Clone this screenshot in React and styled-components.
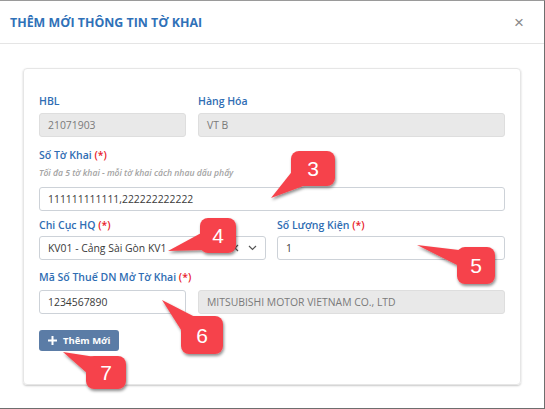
import React from "react";
import styled, { createGlobalStyle } from "styled-components";

const GlobalStyle = createGlobalStyle`
	html, body {
		margin: 0;
		padding: 0;
		background: #ffffff;
	}
	body {
		font-family: "Open Sans", "Noto Sans", "Liberation Sans", sans-serif;
	}
	* {
		box-sizing: border-box;
	}
`;

// Styled Components

const Modal = styled.div`
	position: relative;
	width: 545px;
	height: 409px;
	background: #fff;
	border-top: 1px solid #9a9a9a;
	border-right: 1px solid #6e6e6e;
	border-bottom: 1px solid #6e6e6e;
	overflow: hidden;
`;

const Header = styled.div`
	height: 43px;
	padding: 0 20px 0 10px;
	display: flex;
	align-items: center;
	justify-content: space-between;
	border-bottom: 1px solid #e5e5e5;
`;

const Title = styled.h4`
	margin: 0;
	font-size: 12.4px;
	font-weight: 700;
	color: #2f71b8;
`;

const CloseButton = styled.span`
	font-family: "Liberation Sans", sans-serif;
	font-size: 17px;
	color: #8a8a8a;
	line-height: 1;
`;

const Body = styled.div`
	padding: 24px 23px 0 23px;
`;

const Card = styled.div`
	width: 498px;
	height: 317px;
	border: 1px solid #e6e6e6;
	border-radius: 4px;
	box-shadow: 0 1px 2px rgba(0, 0, 0, 0.22);
	padding: 24px 15px 0 15px;
`;

const Row = styled.div`
	display: grid;
	grid-template-columns: ${(p) => p.$cols};
	column-gap: ${(p) => p.$gap || 12}px;
	margin-top: ${(p) => p.$mt || 0}px;
`;

const Field = styled.div`
	display: flex;
	flex-direction: column;
`;

const Label = styled.label`
	font-size: 10.5px;
	font-weight: 600;
	line-height: 16px;
	color: #2f6db3;
	margin-bottom: ${(p) => p.$mb ?? 4}px;
`;

const Required = styled.span`
	color: #e8202a;
`;

const Hint = styled.div`
	font-size: 8.6px;
	font-style: italic;
	font-weight: 600;
	color: #a3a3a3;
	line-height: 12px;
	margin-bottom: 8px;
`;

const Input = styled.div`
	height: 24px;
	display: flex;
	align-items: center;
	padding: 0 8px;
	font-size: 10.4px;
	border-radius: 3px;
	border: 1px solid ${(p) => (p.$disabled ? "#dedede" : "#cdd2d8")};
	background: ${(p) => (p.$disabled ? "#e9e9e9" : "#ffffff")};
	color: ${(p) => (p.$disabled ? "#7a7a7a" : "#3a3a3a")};
	white-space: nowrap;
	overflow: hidden;
`;

const SelectBox = styled(Input)`
	justify-content: space-between;
	padding-right: 8px;
`;

const SelectIcons = styled.div`
	display: flex;
	align-items: center;
	gap: 9px;
	color: #555;
`;

const AddButton = styled.button`
	margin-top: 16px;
	height: 21px;
	padding: 0 9px;
	display: inline-flex;
	align-items: center;
	gap: 6px;
	border: none;
	border-radius: 3px;
	background: #5b7ca6;
	color: #fff;
	font-family: inherit;
	font-size: 9.5px;
	font-weight: 700;
`;

const Overlay = styled.svg`
	position: absolute;
	left: 0;
	top: 0;
	width: 545px;
	height: 409px;
	pointer-events: none;
`;

const callouts = [
	{ n: 3, x: 291, y: 150, w: 44, h: 35, tail: "294,168 306,184 271,197" },
	{ n: 4, x: 200, y: 217, w: 36, h: 35, tail: "203,231 168,250 203,249" },
	{ n: 5, x: 457, y: 246, w: 38, h: 37, tail: "459,249 417,244 459,265" },
	{ n: 6, x: 181, y: 315, w: 42, h: 38, tail: "197,317 162,299 183,332" },
	{ n: 7, x: 86, y: 355, w: 40, h: 33, tail: "102,357 63,351 88,373" },
];

const Callouts = () => (
	<Overlay viewBox="0 0 545 409">
		<defs>
			<filter id="shade" x="-30%" y="-30%" width="160%" height="160%">
				<feDropShadow dx="1" dy="2" stdDeviation="1.6" floodColor="#000" floodOpacity="0.45" />
			</filter>
		</defs>
		{callouts.map((c) => (
			<g key={c.n}>
				<g filter="url(#shade)" fill="#f6434b">
					<rect x={c.x} y={c.y} width={c.w} height={c.h} rx="8" />
					<polygon points={c.tail} />
				</g>
				<text
					x={c.x + c.w / 2}
					y={c.y + c.h / 2 + 7.5}
					textAnchor="middle"
					fill="#fff"
					fontSize="21"
					fontFamily="Liberation Sans, Arial, sans-serif"
				>
					{c.n}
				</text>
			</g>
		))}
	</Overlay>
);

const App = () => {
	return (
		<>
			<GlobalStyle />
			<Modal>
				<Header>
					<Title>THÊM MỚI THÔNG TIN TỜ KHAI</Title>
					<CloseButton>×</CloseButton>
				</Header>
				<Body>
					<Card>
						<Row $cols="147px 307px">
							<Field>
								<Label>HBL</Label>
								<Input $disabled>21071903</Input>
							</Field>
							<Field>
								<Label>Hàng Hóa</Label>
								<Input $disabled>VT B</Input>
							</Field>
						</Row>
						<Row $cols="1fr" $mt={10}>
							<Field>
								<Label $mb={4}>
									Số Tờ Khai <Required>(*)</Required>
								</Label>
								<Hint>Tối đa 5 tờ khai - mỗi tờ khai cách nhau dấu phẩy</Hint>
								<Input>111111111111,222222222222</Input>
							</Field>
						</Row>
						<Row $cols="227px 228px" $gap={11} $mt={6}>
							<Field>
								<Label $mb={3}>
									Chi Cục HQ <Required>(*)</Required>
								</Label>
								<SelectBox>
									<span>KV01 - Cảng Sài Gòn KV1</span>
									<SelectIcons>
										<svg width="8" height="8" viewBox="0 0 8 8">
											<path d="M1 1L7 7M7 1L1 7" stroke="#555" strokeWidth="1.2" />
										</svg>
										<svg width="9" height="6" viewBox="0 0 9 6">
											<path d="M1 1l3.5 3.5L8 1" fill="none" stroke="#555" strokeWidth="1.2" />
										</svg>
									</SelectIcons>
								</SelectBox>
							</Field>
							<Field>
								<Label $mb={3}>
									Số Lượng Kiện <Required>(*)</Required>
								</Label>
								<Input>1</Input>
							</Field>
						</Row>
						<Row $cols="1fr" $mt={9}>
							<Label $mb={5}>
								Mã Số Thuế DN Mở Tờ Khai <Required>(*)</Required>
							</Label>
						</Row>
						<Row $cols="147px 307px">
							<Input>1234567890</Input>
							<Input $disabled>MITSUBISHI MOTOR VIETNAM CO., LTD</Input>
						</Row>
						<AddButton>
							<svg width="9" height="9" viewBox="0 0 9 9">
								<path d="M4.5 0v9M0 4.5h9" stroke="#fff" strokeWidth="2" />
							</svg>
							Thêm Mới
						</AddButton>
					</Card>
				</Body>
				<Callouts />
			</Modal>
		</>
	);
};

export default App;
